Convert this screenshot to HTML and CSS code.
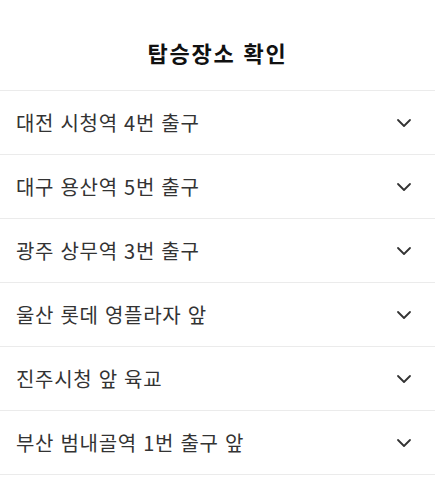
FILE: index.html
```html
<!DOCTYPE html>
<html lang="ko">
<head>
<meta charset="utf-8">
<link rel="stylesheet" href="styles.css">
</head>
<body>
<div class="page">
  <header class="header"><h1 class="title">탑승장소 확인</h1></header>
  <ul class="list">
    <li class="item"><span class="label">대전 시청역 4번 출구</span><svg class="chev" viewBox="0 0 16 16"><path d="M2 5 L8 11 L14 5"/></svg></li>
    <li class="item"><span class="label">대구 용산역 5번 출구</span><svg class="chev" viewBox="0 0 16 16"><path d="M2 5 L8 11 L14 5"/></svg></li>
    <li class="item"><span class="label">광주 상무역 3번 출구</span><svg class="chev" viewBox="0 0 16 16"><path d="M2 5 L8 11 L14 5"/></svg></li>
    <li class="item"><span class="label">울산 롯데 영플라자 앞</span><svg class="chev" viewBox="0 0 16 16"><path d="M2 5 L8 11 L14 5"/></svg></li>
    <li class="item"><span class="label">진주시청 앞 육교</span><svg class="chev" viewBox="0 0 16 16"><path d="M2 5 L8 11 L14 5"/></svg></li>
    <li class="item"><span class="label">부산 범내골역 1번 출구 앞</span><svg class="chev" viewBox="0 0 16 16"><path d="M2 5 L8 11 L14 5"/></svg></li>
  </ul>
</div>
</body>
</html>
```
FILE: styles.css
```css
html, body { margin: 0; padding: 0; background: #fff; }
body { font-family: "Noto Sans CJK KR", "Noto Sans", sans-serif; color: #222; }
.page { width: 435px; }
.header { height: 91px; display: flex; align-items: center; justify-content: center; border-bottom: 1px solid #ebebeb; box-sizing: border-box; }
.title { margin: 0; font-size: 22px; font-weight: 700; color: #111; padding-top: 14px; letter-spacing: 1.8px; line-height: 1.2; }
.list { list-style: none; margin: 0; padding: 0; }
.item { height: 64px; box-sizing: border-box; border-bottom: 1px solid #ebebeb; display: flex; align-items: center; justify-content: space-between; padding: 0 23px 0 16px; }
.label { font-size: 20px; color: #333; letter-spacing: 0.7px; line-height: 1.2; }
.chev { width: 16px; height: 16px; fill: none; stroke: #333; stroke-width: 1.8; stroke-linecap: round; stroke-linejoin: round; }
```
